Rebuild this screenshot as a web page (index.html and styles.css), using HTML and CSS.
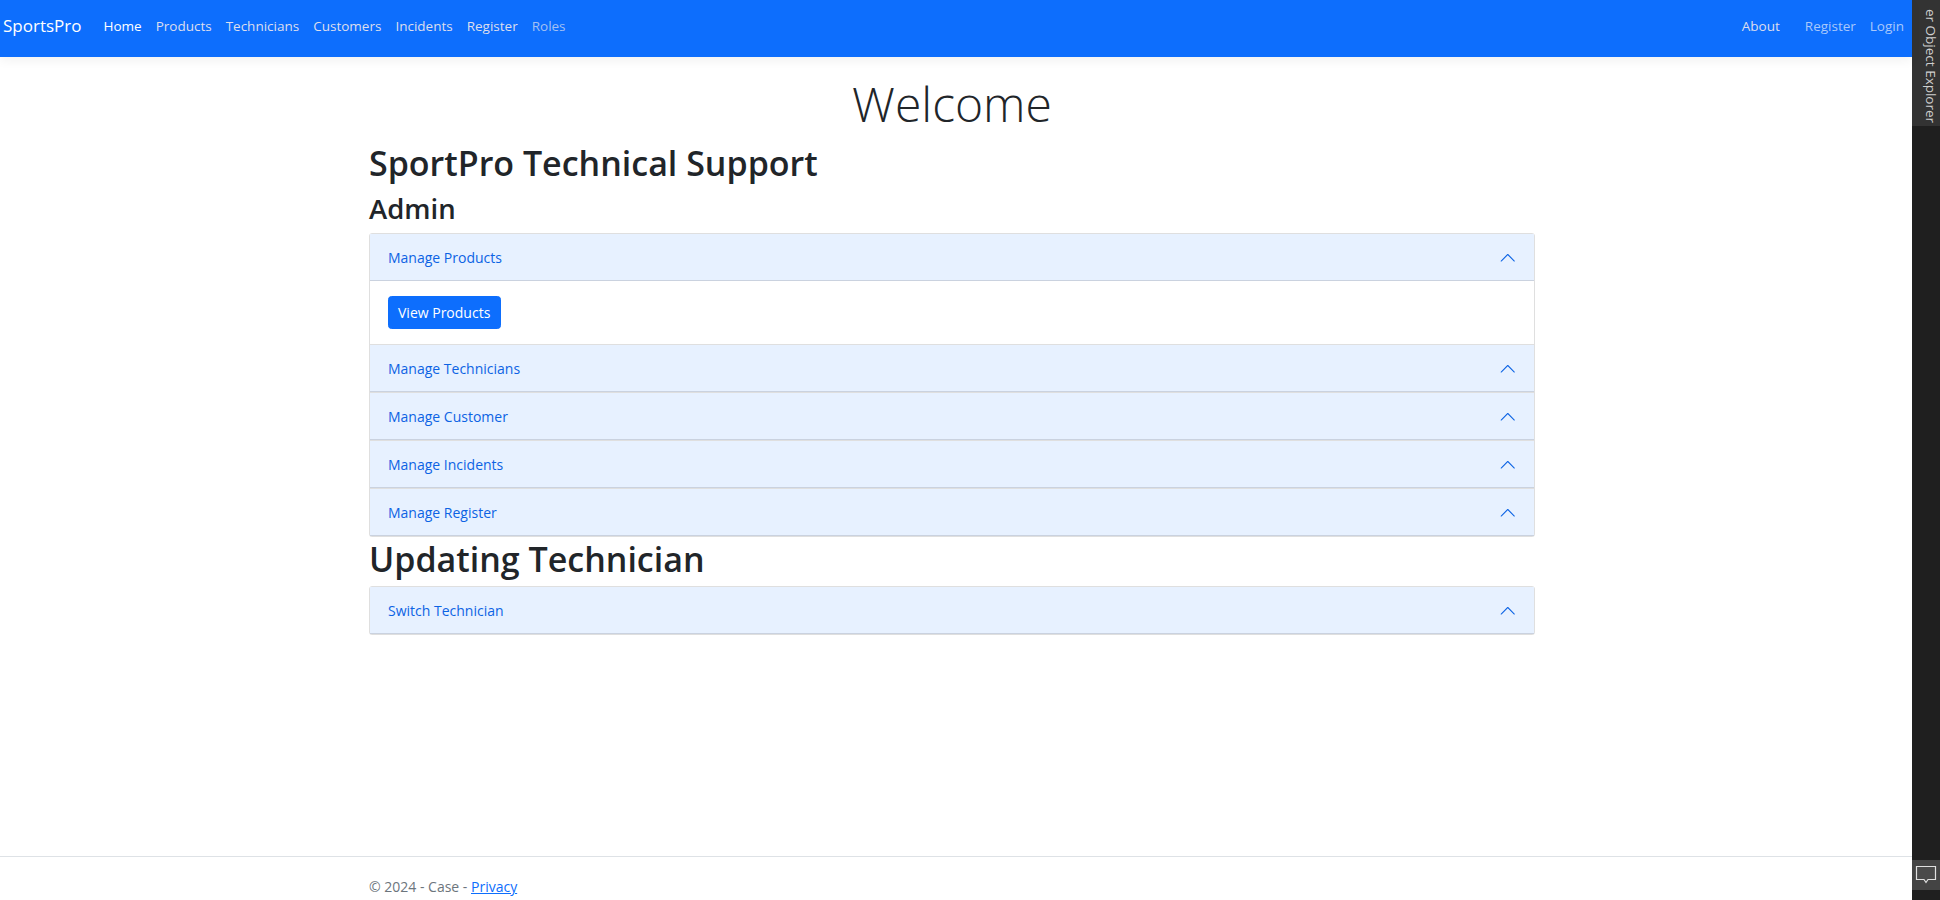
FILE: index.html
```html
<!DOCTYPE html>
<html lang="en">
<head>
<meta charset="utf-8">
<title>Home Page - SportsPro</title>
<link rel="stylesheet" href="styles.css">
</head>
<body>
<div class="app">
  <div class="site">
    <header class="navbar">
      <a class="brand" href="#">SportsPro</a>
      <nav class="nav">
        <a class="nav-link active" href="#">Home</a>
        <a class="nav-link" href="#">Products</a>
        <a class="nav-link" href="#">Technicians</a>
        <a class="nav-link" href="#">Customers</a>
        <a class="nav-link" href="#">Incidents</a>
        <a class="nav-link" href="#">Register</a>
        <a class="nav-link disabled" href="#">Roles</a>
      </nav>
      <nav class="nav nav-right">
        <a class="nav-link" href="#">About</a>
      </nav>
      <nav class="nav nav-account">
        <a class="nav-link faded" href="#">Register</a>
        <a class="nav-link faded" href="#">Login</a>
      </nav>
    </header>

    <main class="main">
      <div class="container">
        <div class="welcome">
          <h1 class="display">Welcome</h1>
        </div>
        <h1 class="page-title">SportPro Technical Support</h1>
        <h2 class="section-title">Admin</h2>

        <div class="accordion">
          <div class="acc-item">
            <button class="acc-btn" type="button">
              <span>Manage Products</span>
              <svg class="chev" viewBox="0 0 16 16"><path d="M1.646 11.354a.5.5 0 0 0 .708 0L8 5.707l5.646 5.647a.5.5 0 0 0 .708-.708l-6-6a.5.5 0 0 0-.708 0l-6 6a.5.5 0 0 0 0 .708z"/></svg>
            </button>
            <div class="acc-body">
              <a class="btn-primary" href="#">View Products</a>
            </div>
          </div>
          <div class="acc-item">
            <button class="acc-btn" type="button">
              <span>Manage Technicians</span>
              <svg class="chev" viewBox="0 0 16 16"><path d="M1.646 11.354a.5.5 0 0 0 .708 0L8 5.707l5.646 5.647a.5.5 0 0 0 .708-.708l-6-6a.5.5 0 0 0-.708 0l-6 6a.5.5 0 0 0 0 .708z"/></svg>
            </button>
          </div>
          <div class="acc-item">
            <button class="acc-btn" type="button">
              <span>Manage Customer</span>
              <svg class="chev" viewBox="0 0 16 16"><path d="M1.646 11.354a.5.5 0 0 0 .708 0L8 5.707l5.646 5.647a.5.5 0 0 0 .708-.708l-6-6a.5.5 0 0 0-.708 0l-6 6a.5.5 0 0 0 0 .708z"/></svg>
            </button>
          </div>
          <div class="acc-item">
            <button class="acc-btn" type="button">
              <span>Manage Incidents</span>
              <svg class="chev" viewBox="0 0 16 16"><path d="M1.646 11.354a.5.5 0 0 0 .708 0L8 5.707l5.646 5.647a.5.5 0 0 0 .708-.708l-6-6a.5.5 0 0 0-.708 0l-6 6a.5.5 0 0 0 0 .708z"/></svg>
            </button>
          </div>
          <div class="acc-item">
            <button class="acc-btn" type="button">
              <span>Manage Register</span>
              <svg class="chev" viewBox="0 0 16 16"><path d="M1.646 11.354a.5.5 0 0 0 .708 0L8 5.707l5.646 5.647a.5.5 0 0 0 .708-.708l-6-6a.5.5 0 0 0-.708 0l-6 6a.5.5 0 0 0 0 .708z"/></svg>
            </button>
          </div>
        </div>

        <h1 class="page-title second">Updating Technician</h1>

        <div class="accordion">
          <div class="acc-item">
            <button class="acc-btn" type="button">
              <span>Switch Technician</span>
              <svg class="chev" viewBox="0 0 16 16"><path d="M1.646 11.354a.5.5 0 0 0 .708 0L8 5.707l5.646 5.647a.5.5 0 0 0 .708-.708l-6-6a.5.5 0 0 0-.708 0l-6 6a.5.5 0 0 0 0 .708z"/></svg>
            </button>
          </div>
        </div>
      </div>
    </main>

    <footer class="footer">
      <div class="container">&copy; 2024 - Case - <a href="#">Privacy</a></div>
    </footer>
  </div>

  <aside class="sidepanel">
    <div class="side-tab"><span class="side-label">er Object Explorer</span></div>
    <div class="side-fill"></div>
    <div class="side-chat">
      <svg viewBox="0 0 22 20" width="22" height="20"><path d="M1.5 1.5h19v13h-7.5l-2 3-2-3h-7.5z" fill="#4a4a4a" stroke="#e0e0e0" stroke-width="1.2" stroke-linejoin="miter"/></svg>
    </div>
  </aside>
</div>
</body>
</html>
```

FILE: styles.css
```css
html, body {
  margin: 0;
  height: 900px;
  overflow: hidden;
}

body {
  font-family: "Open Sans", "Noto Sans", sans-serif;
  font-size: 14px;
  line-height: 21px;
  color: #212529;
  background: #fff;
}

.app {
  display: flex;
  height: 900px;
  overflow: hidden;
}

.site {
  width: 1912px;
  flex: 0 0 1912px;
  height: 916px;
  display: flex;
  flex-direction: column;
}

/* Navbar */
.navbar {
  height: 57px;
  flex: 0 0 57px;
  box-sizing: border-box;
  background: #0d6efd;
  display: flex;
  align-items: center;
  padding: 0 1px 5px 3px;
  box-shadow: 0 4px 10px rgba(0, 0, 0, 0.05);
  position: relative;
  z-index: 1;
}

.brand {
  font-size: 17px;
  line-height: 26px;
  color: #fff;
  text-decoration: none;
  margin-right: 15px;
}

.nav {
  display: flex;
}

.nav-link {
  padding: 0 7px;
  font-size: 13.5px;
  line-height: 21px;
  color: #dcdeee;
  text-decoration: none;
}

.nav-link.active {
  color: #ffffff;
}

.nav-link.disabled {
  color: #a3c0f3;
}

.nav-link.faded {
  color: #a9c8fb;
}

.nav-right {
  margin-left: auto;
  margin-right: 11px;
}

/* Main */
.main {
  flex: 1 1 auto;
  padding-top: 17.5px;
}

.container {
  width: 1166px;
  margin-left: 369px;
}

.welcome {
  text-align: center;
  margin-bottom: 8.7px;
}

.display {
  margin: 0;
  font-size: 48px;
  line-height: 58.8px;
  font-weight: 300;
  color: #212529;
}

.page-title {
  margin: 0 0 8px;
  font-size: 34px;
  line-height: 42px;
  font-weight: 600;
}

.page-title.second {
  margin: 1px 0 5.5px;
}

.section-title {
  margin: 0 0 7.4px;
  font-size: 27.5px;
  line-height: 33.6px;
  font-weight: 600;
}

/* Accordion */
.accordion {
  display: flex;
  flex-direction: column;
}

.acc-item {
  border: 1px solid rgba(0, 0, 0, 0.125);
  background: #fff;
}

.acc-item + .acc-item {
  border-top: 0;
}

.acc-item:first-child {
  border-top-left-radius: 3.5px;
  border-top-right-radius: 3.5px;
}

.acc-item:last-child {
  border-bottom-left-radius: 3.5px;
  border-bottom-right-radius: 3.5px;
}

.acc-btn {
  display: flex;
  align-items: center;
  width: 100%;
  box-sizing: border-box;
  height: 47px;
  padding: 13px 18px;
  border: 0;
  margin: 0;
  background: #e7f1ff;
  color: #0c63e4;
  font-family: inherit;
  font-size: 14px;
  line-height: 21px;
  text-align: left;
  box-shadow: inset 0 -1px 0 rgba(0, 0, 0, 0.125);
  cursor: pointer;
}

.chev {
  width: 17.5px;
  height: 17.5px;
  margin-left: auto;
  fill: #0c63e4;
  flex-shrink: 0;
}

.acc-body {
  padding: 15px 17.5px;
  display: flex;
}

.btn-primary {
  display: inline-block;
  padding: 5.25px 9.5px;
  font-size: 14px;
  line-height: 21px;
  color: #fff;
  background: #0d6efd;
  border: 1px solid #0d6efd;
  border-radius: 3.5px;
  text-decoration: none;
}

/* Footer */
.footer {
  flex: 0 0 60px;
  height: 60px;
  box-sizing: border-box;
  border-top: 1px solid #dee2e6;
  line-height: 59px;
  color: #6c757d;
  white-space: nowrap;
}

.footer a {
  color: #0d6efd;
  text-decoration: underline;
}

/* Side panel (IDE) */
.sidepanel {
  flex: 0 0 28px;
  width: 28px;
  height: 900px;
  background: #1f1f1f;
  display: flex;
  flex-direction: column;
}

.side-tab {
  height: 126px;
  flex: 0 0 126px;
  background: #333333;
  overflow: hidden;
  display: flex;
  flex-direction: column;
  justify-content: flex-end;
  align-items: flex-end;
  padding: 0 2px 3px 0;
  box-sizing: border-box;
}

.side-label {
  writing-mode: vertical-rl;
  white-space: nowrap;
  font-family: "Open Sans", "Noto Sans", sans-serif;
  font-size: 13.5px;
  line-height: 14px;
  color: #cfcfcf;
}

.side-fill {
  flex: 1 1 auto;
}

.side-chat {
  height: 30px;
  flex: 0 0 30px;
  background: #444444;
  margin-bottom: 10px;
  display: flex;
  align-items: center;
  justify-content: center;
}
```
